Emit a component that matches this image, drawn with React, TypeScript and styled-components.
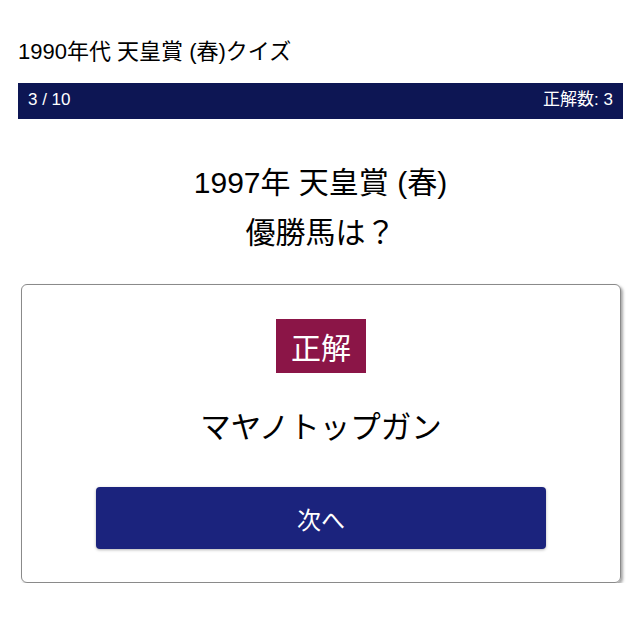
import React from "react";
import styled, { createGlobalStyle } from "styled-components";

const Global = createGlobalStyle`
  html, body { margin: 0; padding: 0; background: #fff; }
  body { font-family: "Liberation Sans", "Noto Sans CJK JP", sans-serif; color: #000; }
`;

const Page = styled.div`
  padding: 36px 17px 0 18px;
`;

const Title = styled.h1`
  margin: 0;
  font-size: 22px;
  font-weight: normal;
  line-height: 32px;
  height: 32px;
`;

const StatusBar = styled.div`
  margin-top: 15px;
  height: 36px;
  box-sizing: border-box;
  padding: 7px 10px 0;
  background: #0d1654;
  color: #fff;
  display: flex;
  justify-content: space-between;
  align-items: baseline;
  font-size: 17px;
  line-height: 20px;
`;

const Question = styled.div`
  margin-top: 39px;
  text-align: center;
  font-size: 30px;
  line-height: 50px;
`;

const Card = styled.div`
  margin: 26px 2px 0 3px;
  border: 1px solid #8a8a8a;
  border-radius: 6px;
  box-shadow: 2px 2px 3px rgba(0, 0, 0, 0.35);
  padding: 34px 0 33px;
  display: flex;
  flex-direction: column;
  align-items: center;
`;

const Badge = styled.div`
  background: #8b1547;
  color: #fff;
  width: 90px;
  height: 54px;
  display: flex;
  align-items: center;
  justify-content: center;
  font-size: 30px;
  font-family: "Noto Sans CJK JP", sans-serif;
`;

const Answer = styled.div`
  margin-top: 27px;
  font-size: 30.5px;
  line-height: 50px;
  font-family: "Noto Sans CJK JP", sans-serif;
`;

const NextButton = styled.button`
  margin-top: 37px;
  width: 450px;
  height: 62px;
  border: none;
  border-radius: 4px;
  background: #1b237d;
  color: #fff;
  font-size: 24px;
  font-family: "Noto Sans CJK JP", sans-serif;
  box-shadow: 0 1px 3px rgba(0, 0, 0, 0.3);
`;

export default function App() {
  return (
    <>
      <Global />
      <Page>
        <Title>1990年代 天皇賞 (春)クイズ</Title>
        <StatusBar>
          <span>3 / 10</span>
          <span>正解数: 3</span>
        </StatusBar>
        <Question>
          1997年 天皇賞 (春)
          <br />
          優勝馬は？
        </Question>
        <Card>
          <Badge>正解</Badge>
          <Answer>マヤノトップガン</Answer>
          <NextButton>次へ</NextButton>
        </Card>
      </Page>
    </>
  );
}
